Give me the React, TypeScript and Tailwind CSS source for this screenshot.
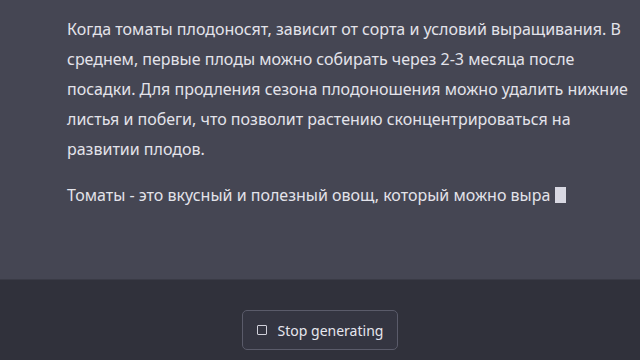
export default function App() {
  return (
    <div className="flex h-[360px] w-[640px] flex-col overflow-hidden bg-[#30313b] font-['Noto_Sans',sans-serif]">
      <div className="h-[280px] shrink-0 border-b border-[#3a3b46] bg-[#454653] pl-[67px] pr-[10px] pt-[14px] text-[16px] leading-[30px] text-[#e3e3ea]">
        <p className="mb-[16px]">
          Когда томаты плодоносят, зависит от сорта и условий выращивания. В
          среднем, первые плоды можно собирать через 2-3 месяца после
          посадки. Для продления сезона плодоношения можно удалить нижние
          листья и побеги, что позволит растению сконцентрироваться на
          развитии плодов.
        </p>
        <p>
          Томаты - это вкусный и полезный овощ, который можно выра
          <span className="ml-[5px] inline-block h-[16px] w-[11px] translate-y-[2px] bg-[#d8d8e2]" />
        </p>
      </div>
      <div className="flex flex-1 justify-center pt-[30px]">
        <button className="flex h-[40px] items-center gap-[11px] rounded-[5px] border border-[#5a5b6a] bg-[#343541] px-[14px] text-[14px] text-[#e6e6ee]">
          <span className="h-[10px] w-[10px] rounded-[1px] border border-[#d0d0da]" />
          Stop generating
        </button>
      </div>
    </div>
  );
}
